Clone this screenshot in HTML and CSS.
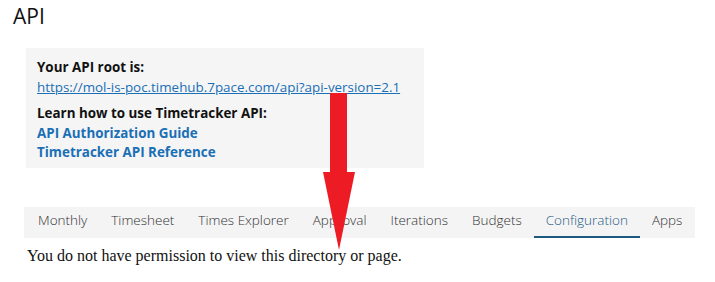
FILE: index.html
```html
<!DOCTYPE html>
<html lang="en">
<head>
    <meta charset="UTF-8">
    <title>API</title>
    <link rel="stylesheet" href="styles.css">
</head>
<body>
    <div class="page">
        <h1 class="page-title">API</h1>
        <div class="api-panel">
            <p class="api-block">
                <strong>Your API root is:</strong><br>
                <a class="api-root" href="#">https://mol-is-poc.timehub.7pace.com/api?api-version=2.1</a>
            </p>
            <p class="api-block">
                <strong>Learn how to use Timetracker API:</strong><br>
                <a class="doc-link" href="#">API Authorization Guide</a><br>
                <a class="doc-link" href="#">Timetracker API Reference</a>
            </p>
        </div>
        <nav class="tabs">
            <a class="tab" href="#">Monthly</a>
            <a class="tab" href="#">Timesheet</a>
            <a class="tab" href="#">Times Explorer</a>
            <a class="tab" href="#">Approval</a>
            <a class="tab" href="#">Iterations</a>
            <a class="tab" href="#">Budgets</a>
            <a class="tab active" href="#">Configuration</a>
            <a class="tab" href="#">Apps</a>
        </nav>
        <p class="denied">You do not have permission to view this directory or page.</p>
        <svg class="arrow" width="40" height="160" viewBox="0 0 40 160">
            <polygon points="12,0 29,0 29,79 37,79 21,157 5,79 12,79" fill="#ed1c24"/>
        </svg>
    </div>
</body>
</html>
```

FILE: styles.css
```css
* { margin: 0; padding: 0; box-sizing: border-box; }
body { background: #fff; font-family: 'Open Sans', 'Noto Sans', sans-serif; color: #111; }
.page { position: relative; width: 715px; height: 282px; padding-top: 3px; }
.page-title { font-size: 21px; font-weight: 400; margin-left: 13px; line-height: 27px; }
.api-panel { margin: 18px 0 0 26px; width: 398px; height: 120px; background: #f5f5f5; padding: 10px 11px; font-size: 13.4px; line-height: 19.5px; }
.api-block { margin-bottom: 7px; }
.api-block strong { font-weight: 700; }
.api-root { color: #1a6fb5; text-decoration: underline; }
.doc-link { color: #1a6fb5; font-weight: 700; text-decoration: none; }
.tabs { display: flex; margin: 39px 0 0 24px; padding-left: 2px; width: 671px; height: 31px; background: #f4f4f4; }
.tab { display: flex; align-items: center; flex-shrink: 0; white-space: nowrap; padding: 0 12px 4px; font-size: 13.5px; font-weight: 300; color: #333; text-decoration: none; border-bottom: 2px solid transparent; }
.tab.active { color: #1e5c86; border-bottom-color: #1e5a80; }
.denied { font-family: 'Liberation Serif', 'Times New Roman', serif; font-size: 16px; margin: 7px 0 0 27px; line-height: 22px; }
.arrow { position: absolute; left: 318px; top: 93px; }
```
